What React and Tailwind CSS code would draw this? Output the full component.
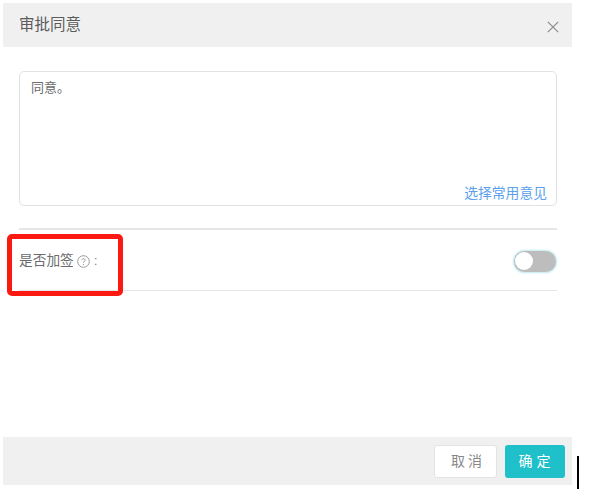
import React from 'react';

const App = () => {
  return (
    <div className="relative w-[591px] h-[489px] bg-white overflow-hidden pt-[3px] pl-[3px] font-['Liberation_Sans','Noto_Sans_CJK_SC',sans-serif]">
      <div className="w-[569px] h-[482px] flex flex-col">
        {/* Header */}
        <div className="h-[44px] shrink-0 bg-[#f0f0f0] flex items-center justify-between pl-[16px] pr-[13px]">
          <span className="text-[15.5px] text-[#5c5c5c]">审批同意</span>
          <svg className="w-[12px] h-[12px] mt-[3px]" viewBox="0 0 12 12" fill="none" stroke="#8a8a8a" strokeWidth="1.2">
            <path d="M0.8 0.8 L11.2 11.2 M11.2 0.8 L0.8 11.2" />
          </svg>
        </div>

        {/* Body */}
        <div className="flex-1 pt-[24px] pl-[16px] pr-[15px]">
          <div className="h-[135px] border border-[#e2e2e2] rounded-[5px] flex flex-col justify-between pl-[11px] pr-[9px] pt-[7px] pb-[2px]">
            <div className="text-[13px] leading-[18px] text-[#6c6c6c]">同意。</div>
            <div className="text-[13.8px] leading-[18px] text-[#5a9ff0] text-right">选择常用意见</div>
          </div>
          <div className="mt-[22px] border-t-2 border-b border-t-[#e6e6e6] border-b-[#e6e6e6] h-[63px] pt-[2px] flex items-center justify-between">
            <div className="flex items-center text-[13.7px] text-[#6c6c6c] pt-[1px]">
              <span>是否加签</span>
              <svg className="w-[13px] h-[13px] ml-[3px]" viewBox="0 0 13 13" fill="none">
                <circle cx="6.5" cy="6.5" r="5.8" stroke="#999" strokeWidth="1" />
                <path d="M4.9 5.2 C4.9 3.2 8.1 3.2 8.1 5.1 C8.1 6.3 6.5 6.3 6.5 7.8" stroke="#999" strokeWidth="1" />
                <circle cx="6.5" cy="9.6" r="0.7" fill="#999" />
              </svg>
              <span className="ml-[4px] text-[#888]">:</span>
            </div>
            <div className="w-[42px] h-[21px] rounded-full bg-[#bdbdbd] flex items-center pl-[1px] mr-[1px] shadow-[0_0_2px_1px_#bfe9ee]">
              <div className="w-[18px] h-[18px] rounded-full bg-white" />
            </div>
          </div>
        </div>

        {/* Footer */}
        <div className="h-[48px] shrink-0 bg-[#f0f0f0] flex items-center justify-end gap-[8px] pr-[7px] pt-[1px]">
          <button className="w-[63px] h-[33px] pl-[5px] bg-white border border-[#e3e3e3] rounded-[3px] text-[14px] tracking-[3px] text-[#888]">取消</button>
          <button className="w-[60px] h-[33px] pl-[3px] bg-[#1fc0ca] rounded-[3px] text-[14px] tracking-[4px] text-white">确定</button>
        </div>
      </div>

      {/* Annotations on top of the screenshot */}
      <div className="absolute left-[7px] top-[234px] w-[116px] h-[62px] border-[5px] border-[#fb1a12] rounded-[5px]" />
      <div className="absolute left-[577px] top-[456px] w-[2px] h-[33px] bg-black" />
    </div>
  );
};

export default App;
